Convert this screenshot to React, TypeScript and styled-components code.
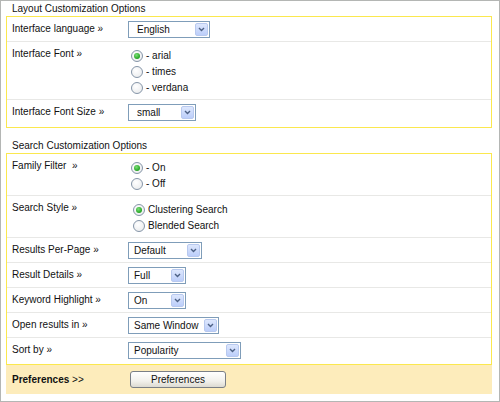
import React from 'react';
import styled, {createGlobalStyle} from 'styled-components';

const GlobalStyle = createGlobalStyle`
    html, body {
        margin: 0;
        padding: 0;
        background: #ffffff;
    }
    body {
        font-family: "Liberation Sans", Arial, sans-serif;
        font-size: 10px;
        color: #111111;
    }
`

const Frame = styled.div`
    box-sizing: border-box;
    width: 500px;
    height: 402px;
    border: 1px solid #b4b6b4;
    padding: 0 7px 0 5px;
`

const SectionTitle = styled.div<{first?: boolean}>`
    padding: ${props => props.first ? '2px' : '12px'} 0 0 6px;
    height: 13px;
    line-height: 12px;
`

const Panel = styled.div`
    border: 1px solid #fbe84e;
    background: #ffffff;
`

const Row = styled.div<{last?: boolean, bottom?: number}>`
    display: grid;
    grid-template-columns: 116px 1fr;
    padding: 4px 0 ${props => props.bottom ?? 3}px 5px;
    border-bottom: ${props => props.last ? 'none' : '1px solid #e8e8e6'};
`

const Label = styled.div`
    line-height: 14px;
    padding-top: 1px;
`

const RadioGroup = styled.div<{indent?: number}>`
    display: flex;
    flex-direction: column;
    padding: 2px 0 0 ${props => props.indent ?? 3}px;
`

const RadioItem = styled.div`
    display: flex;
    align-items: center;
    height: 16px;
`

const RadioCircle = styled.span<{checked?: boolean}>`
    box-sizing: border-box;
    width: 12px;
    height: 12px;
    border-radius: 50%;
    border: 1px solid #8595a8;
    background: radial-gradient(circle at 40% 35%, #ffffff 0%, #e6e8ea 100%);
    display: flex;
    align-items: center;
    justify-content: center;
    margin-right: 3px;

    &::after {
        content: '';
        display: ${props => props.checked ? 'block' : 'none'};
        width: 6px;
        height: 6px;
        border-radius: 50%;
        background: radial-gradient(circle at 40% 35%, #7ee07a 0%, #21a321 70%);
    }
`

const RadioText = styled.span`
    line-height: 14px;
`

const SelectBox = styled.div<{width: number}>`
    box-sizing: border-box;
    width: ${props => props.width}px;
    height: 17px;
    border: 1px solid #7f9db9;
    background: #ffffff;
    display: flex;
    align-items: center;
    justify-content: space-between;
    padding: 1px;
`

const SelectText = styled.span<{pad: number}>`
    padding-left: ${props => props.pad}px;
    line-height: 13px;
`

const Arrow = styled.span`
    box-sizing: border-box;
    width: 13px;
    height: 13px;
    border: 1px solid #b8c9ef;
    border-radius: 2px;
    background: linear-gradient(#dde7fd, #bccefa);
    display: flex;
    align-items: center;
    justify-content: center;
`

const PrefBar = styled.div`
    display: grid;
    grid-template-columns: 118px 1fr;
    align-items: center;
    height: 29px;
    padding-left: 6px;
    background: #fdecbb;
`

const PrefLabel = styled.div`
    b {
        font-weight: bold;
    }
`

const Button = styled.button`
    box-sizing: border-box;
    width: 96px;
    height: 17px;
    padding: 0;
    font-family: "Liberation Sans", Arial, sans-serif;
    font-size: 10px;
    color: #111111;
    border: 1px solid #7a7f86;
    border-radius: 3px;
    background: linear-gradient(#ffffff 0%, #f2f1ec 60%, #dcdad2 100%);
`

type SelectProps = {
    value: string
    width: number
    pad?: number
}

const Select = ({value, width, pad = 4}: SelectProps) => (
    <SelectBox width={width}>
        <SelectText pad={pad}>{value}</SelectText>
        <Arrow>
            <svg width="7" height="5" viewBox="0 0 7 5">
                <path d="M1 1 L3.5 3.5 L6 1" fill="none" stroke="#4d6185" strokeWidth="1.4"/>
            </svg>
        </Arrow>
    </SelectBox>
)

type RadioOption = {
    text: string
    checked?: boolean
}

const Radios = ({options, indent}: {options: RadioOption[], indent?: number}) => (
    <RadioGroup indent={indent}>
        {options.map(o => (
            <RadioItem key={o.text}>
                <RadioCircle checked={o.checked}/>
                <RadioText>{o.text}</RadioText>
            </RadioItem>
        ))}
    </RadioGroup>
)

const App = () => {
    return (
        <>
            <GlobalStyle/>
            <Frame>
                <SectionTitle first>Layout Customization Options</SectionTitle>
                <Panel>
                    <Row>
                        <Label>Interface language »</Label>
                        <div><Select value="English" width={82} pad={7}/></div>
                    </Row>
                    <Row>
                        <Label>Interface Font »</Label>
                        <Radios options={[{text: '- arial', checked: true}, {text: '- times'}, {text: '- verdana'}]}/>
                    </Row>
                    <Row last bottom={6}>
                        <Label>Interface Font Size »</Label>
                        <div><Select value="small" width={68} pad={7}/></div>
                    </Row>
                </Panel>

                <SectionTitle>Search Customization Options</SectionTitle>
                <Panel>
                    <Row>
                        <Label>Family Filter &nbsp;»</Label>
                        <Radios options={[{text: '- On', checked: true}, {text: '- Off'}]}/>
                    </Row>
                    <Row>
                        <Label>Search Style »</Label>
                        <Radios indent={5} options={[{text: 'Clustering Search', checked: true}, {text: 'Blended Search'}]}/>
                    </Row>
                    <Row>
                        <Label>Results Per-Page »</Label>
                        <div><Select value="Default" width={74}/></div>
                    </Row>
                    <Row>
                        <Label>Result Details »</Label>
                        <div><Select value="Full" width={58}/></div>
                    </Row>
                    <Row>
                        <Label>Keyword Highlight »</Label>
                        <div><Select value="On" width={58}/></div>
                    </Row>
                    <Row>
                        <Label>Open results in »</Label>
                        <div><Select value="Same Window" width={91}/></div>
                    </Row>
                    <Row last bottom={5}>
                        <Label>Sort by »</Label>
                        <div><Select value="Popularity" width={113}/></div>
                    </Row>
                </Panel>
                <PrefBar>
                    <PrefLabel><b>Preferences</b> &gt;&gt;</PrefLabel>
                    <div><Button>Preferences</Button></div>
                </PrefBar>
            </Frame>
        </>
    );
};

export default App;
